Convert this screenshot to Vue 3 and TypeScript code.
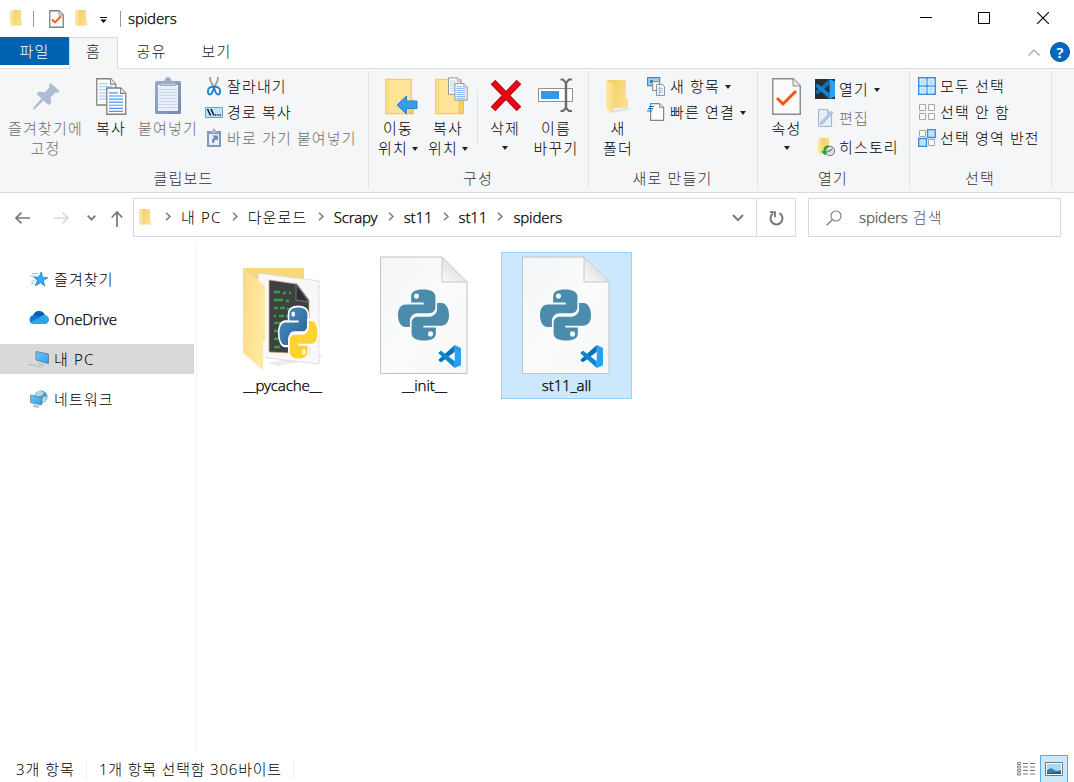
<script setup lang="ts">
interface SideEntry { icon: string; label: string; active?: boolean }
interface FileEntry { name: string; kind: 'folder' | 'python'; selected?: boolean }

const crumbs: string[] = ['내 PC', '다운로드', 'Scrapy', 'st11', 'st11', 'spiders']
const sideEntries: SideEntry[] = [
  { icon: 'star', label: '즐겨찾기' },
  { icon: 'cloud', label: 'OneDrive' },
  { icon: 'pc', label: '내 PC', active: true },
  { icon: 'network', label: '네트워크' },
]
const files: FileEntry[] = [
  { name: '__pycache__', kind: 'folder' },
  { name: '__init__', kind: 'python' },
  { name: 'st11_all', kind: 'python', selected: true },
]
const isLatin = (s: string): boolean => /^[\x20-\x7e]+$/.test(s)
</script>

<template>
  <div class="window">
    <svg class="defs" width="0" height="0">
      <defs>
        <linearGradient id="gFolder" x1="0" y1="0" x2="1" y2="0.4">
          <stop offset="0" stop-color="#f3ca5e" /><stop offset="1" stop-color="#fbdf8c" />
        </linearGradient>
        <linearGradient id="gFlap" x1="0" y1="0" x2="1" y2="0">
          <stop offset="0" stop-color="#ffe9a6" /><stop offset="1" stop-color="#fbd97c" />
        </linearGradient>
        <linearGradient id="gFlapBig" x1="0" y1="0" x2="1" y2="0.3">
          <stop offset="0" stop-color="#fbdc86" /><stop offset="1" stop-color="#ffe9a2" />
        </linearGradient>
        <linearGradient id="gPage" x1="0" y1="0" x2="1" y2="1">
          <stop offset="0" stop-color="#f4f5f6" /><stop offset="0.5" stop-color="#fafbfb" /><stop offset="1" stop-color="#f7f7f8" />
        </linearGradient>
        <linearGradient id="gCurl" x1="0" y1="1" x2="0.7" y2="0.2">
          <stop offset="0" stop-color="#fafafa" /><stop offset="1" stop-color="#dadada" />
        </linearGradient>
        <linearGradient id="gBlue" x1="0" y1="0" x2="1" y2="1">
          <stop offset="0" stop-color="#4a90c8" /><stop offset="1" stop-color="#285f8e" />
        </linearGradient>
        <linearGradient id="gClip" x1="0" y1="0" x2="1" y2="1">
          <stop offset="0" stop-color="#98abc9" /><stop offset="1" stop-color="#7489b0" />
        </linearGradient>
        <linearGradient id="gScreen" x1="0" y1="0" x2="1" y2="1">
          <stop offset="0" stop-color="#6cc9ff" /><stop offset="1" stop-color="#2d9df0" />
        </linearGradient>
      </defs>
      <symbol id="folder" viewBox="0 0 12 17">
        <path d="M1 0h10v10.5l1 .6v4.4H4V2z" fill="url(#gFolder)" />
        <path d="M0 0l4 2.6v9l-.5 5.4L0 14.6z" fill="url(#gFlap)" />
      </symbol>
      <symbol id="pyhalf" viewBox="0 0 24 24" overflow="visible">
        <path fill-rule="evenodd" d="M11.9 0C8 0 6.2 1.2 6.2 3.3v2.8h5.9V7H3.7C1.2 7 0 9 0 12s1.3 5.7 3.5 5.7h2.1v-2.8c0-2.1 1.6-3.7 3.7-3.7h5.5c1.6 0 2.8-1.2 2.8-2.8V3.3C17.6 1.2 15.3 0 11.9 0zM8.7 1.9a1.2 1.2 0 1 1 0 2.4 1.2 1.2 0 0 1 0-2.4z" />
      </symbol>
      <symbol id="vscode" viewBox="0 0 24 24">
        <path d="M17.5 0L1 14.8c-.6.5-.6 1.200 0 1.600l1.400 1.200c.4.4 1 .4 1.500 0L17.500 7z" fill="#0b70b8" />
        <path d="M17.500 24L1 9.200c-.6-.5-.6-1.200 0-1.600l1.400-1.200c.4-.4 1-.4 1.500 0L17.500 17z" fill="#0a86d4" />
        <path d="M17.500 0L24 3v18l-6.500 3z" fill="#28a2ee" />
      </symbol>
      <symbol id="copydocs" viewBox="0 0 31 36">
        <path d="M.75.75h14l5 5v20.500h-19z" fill="#fbfbfb" stroke="#858585" stroke-width="1.300" />
        <path d="M14.500.75v5.200h5" fill="#ececec" stroke="#858585" />
        <path d="M3 5.500h9M3 8.500h13M3 11.500h13M3 14.500h13M3 17.500h13M3 20.500h13" stroke="#9cc3f7" />
        <path d="M10.750 9.750h14l5 5v20.500h-19z" fill="#fdfdfd" stroke="#808080" stroke-width="1.300" />
        <path d="M24.500 9.750v5.200h5" fill="#ececec" stroke="#808080" />
        <path d="M13 14.500h9M13 17.500h14M13 20.500h14M13 23.500h14M13 26.500h14M13 29.500h14M13 32.500h14" stroke="#4c95f5" stroke-width="1.100" />
      </symbol>
      <symbol id="bigfolder" viewBox="0 0 30 37">
        <path d="M.75.75h26.500v21.500h2v14H.75z" fill="#ffe397" stroke="#efcd5f" stroke-width="1.200" />
        <path d="M3.500 1v35" stroke="#f3d477" />
        <path d="M25 36V25q0-2.500 2-2.500t2.200 2.500v11z" fill="#f7d368" stroke="#e5bc48" />
      </symbol>
      <symbol id="checkpage" viewBox="0 0 29 37">
        <path d="M.75.75h20.500l7 7v28.500H.75z" fill="#fbfbfb" stroke="#8b8b8b" stroke-width="1.400" />
        <path d="M21 .75V8h7.200" fill="#e8e8e8" stroke="#8b8b8b" />
        <path d="M5 20l6 6 13-13" fill="none" stroke="#f2580d" stroke-width="3" />
      </symbol>

      <symbol id="star" viewBox="0 0 20 18">
        <path d="M12.300 2l1.200 5.200 5.300.6-4.600 2.800 1.600 5.400-4.300-3.300-5.300 3 2.200-5.300-3.700-3.500 5.200.2z" fill="#35aaf2" stroke="#1a83d0" stroke-width=".8" />
        <path d="M3 3.500h6M1.500 6h5M2.500 11h3.500M2 13.500h3" stroke="#7fc2ef" stroke-width=".9" />
      </symbol>
      <symbol id="cloud" viewBox="0 0 20 18">
        <path d="M4 6C4.500 2.800 7.200 1 10 1c2.700 0 5 1.500 6 4l-7 5z" fill="#0b5cb5" />
        <path d="M4.500 14A4.400 4.400 0 0 1 4.200 5.300c2.200-.4 4 .5 5.600 1.700L14 10l-6 4z" fill="#0f78d4" />
        <path d="M9.500 8.500C11.500 6 13.500 4.700 16 5c2.500.5 4 2.400 4 4.700 0 2.500-1.800 4.300-4.300 4.300H4.500c-1.500 0-2.800-.7-3.700-2z" fill="#28a8ea" />
      </symbol>
      <symbol id="pc" viewBox="0 0 20 18">
        <path d="M7 1.500l12.500 2.500v9.500L7 10z" fill="url(#gScreen)" stroke="#667887" stroke-width=".8" />
        <path d="M11 13l5 1.500-2 1.500-6-1.500z" fill="#b9c2c9" />
        <path d="M0 14.500l4 .5 5 1.500 4 1" stroke="#a6adb2" fill="none" stroke-dasharray="3 1" />
      </symbol>
      <symbol id="network" viewBox="0 0 20 18">
        <circle cx="12" cy="7" r="6.500" fill="#4e9cc4" />
        <path d="M8 2c3-2 6-1 7 1l-3 3-4 1-2-1zM14 7l4-1-1 5-3 2-1-3z" fill="#b0d9e6" />
        <path d="M1.500 5l11 2.500V15l-11-2.500z" fill="url(#gScreen)" stroke="#6c7e8b" stroke-width=".8" />
        <path d="M5 14.500l6 1.500-2 2-5-1z" fill="#b5bfc5" />
      </symbol>
    </svg>

    <header class="titlebar">
      <svg class="tb-folder" width="12" height="17"><use href="#folder" /></svg>
      <i class="tb-sep first" />
      <svg class="tb-check" width="15" height="18" viewBox="0 0 15 18">
        <path d="M.75.750h9.500l4 4v12.500H.75z" fill="#f9f9f9" stroke="#808080" stroke-width="1.300" />
        <path d="M10 .75V5h4.200" fill="#ddd" stroke="#999" />
        <path d="M3 9.500l3 3 6-6.300" fill="none" stroke="#ee6019" stroke-width="1.900" />
      </svg>
      <svg class="tb-folder2" width="12" height="17"><use href="#folder" /></svg>
      <svg class="tb-more" width="7" height="6" viewBox="0 0 7 6"><path d="M0 .5h7" stroke="#111" /><path d="M.3 2.500h6.400L3.500 6z" fill="#111" /></svg>
      <i class="tb-sep" />
      <span class="title latin">spiders</span>
      <div class="winbtns">
        <svg width="12" height="12" viewBox="0 0 12 12"><path d="M0 5.500h12" stroke="#000" /></svg>
        <svg width="12" height="12" viewBox="0 0 12 12"><path d="M.5.5h11v11H.5z" stroke="#000" fill="none" /></svg>
        <svg class="w-close" width="12" height="12" viewBox="0 0 12 12"><path d="M0 0l12 12M12 0L0 12" stroke="#000" stroke-width="1.100" /></svg>
      </div>
    </header>

    <nav class="tabs">
      <span class="tab file">파일</span>
      <span class="tab home">홈</span>
      <span class="tab share">공유</span>
      <span class="tab view">보기</span>
      <svg class="collapse" width="12" height="7" viewBox="0 0 12 7"><path d="M.5 6.500L6 1l5.500 5.500" fill="none" stroke="#a0a0a0" stroke-width="1.200" /></svg>
      <span class="help">?</span>
    </nav>

    <section class="ribbon">
      <div class="group g-clip">
        <div class="tools">
          <div class="big pin dim">
            <svg width="28" height="28" viewBox="0 0 28 28">
              <path d="M17.500 1l9 8-1.500 2-2.500-.5-5 5 .7 5.500-2.700 2.300-5-4.800L1.800 27 0 27.500l.5-2 8-9L3.500 12 6 9.500l6 .7 4.500-5.200L16 3z" fill="#aebdd3" />
            </svg>
            <span>즐겨찾기에<br>고정</span>
          </div>
          <div class="big copy">
            <svg width="31" height="37" viewBox="0 0 31 36" preserveAspectRatio="none"><use href="#copydocs" width="31" height="36" /></svg>
            <span>복사</span>
          </div>
          <div class="big paste dim">
            <svg width="26" height="37" viewBox="0 0 26 37">
              <rect y="4" width="26" height="33" rx="1.500" fill="url(#gClip)" />
              <path d="M3 8h20v26H3z" fill="#eaf0f9" />
              <path d="M4 12.500h18M4 15.500h18M4 18.500h18M4 21.500h18M4 24.500h18M4 27.500h18M4 30.500h18" stroke="#c7d6ea" />
              <path d="M5 9V5.500l4-1.500c.8-.5 1.200-4 4-4s3.200 3.500 4 4l4 1.500V9z" fill="#9badc8" />
              <path d="M6 7.500h14" stroke="#c4d1e2" />
            </svg>
            <span>붙여넣기</span>
          </div>
          <div class="rows">
            <div class="row">
              <svg width="18" height="20" viewBox="0 0 18 20">
                <path d="M5 1c0 3 1.500 7 5 11M13 1c0 3-1.500 7-5 11" stroke="#979ca1" stroke-width="1.700" fill="none" />
                <path d="M8.500 11c-1.500-.7-4.500 0-5.300 2.500s0 5 1.500 5 3.300-3 4.300-7c1 4 2.800 7 4.300 7s2.300-2.500 1.500-5-3.800-3.200-5.300-2.500z" fill="none" stroke="#1c84cf" stroke-width="1.900" />
              </svg>
              <span>잘라내기</span>
            </div>
            <div class="row">
              <svg width="18" height="20" viewBox="0 0 18 20">
                <path d="M.5 5.500h17v10H.5z" fill="#bfe2fb" stroke="#6f9fc8" />
                <path d="M2.500 7l3 6.500M6 7l3 6.500" stroke="#111" stroke-width="1.500" />
                <path d="M10 13h1.300m1 0h1.300m1 0h1.300" stroke="#222" stroke-width="1.500" />
              </svg>
              <span>경로 복사</span>
            </div>
            <div class="row dim">
              <svg width="18" height="20" viewBox="0 0 18 20">
                <path d="M2 3h14v16H2z" fill="#8297bb" />
                <path d="M4 6h10v11H4z" fill="#e8eef7" />
                <path d="M5 5l2-2.500L9 0l2 2.500L13 5z" fill="#a8b8d0" />
                <path d="M7.500 7.500H13V13l-1.700-1.700C9.500 12 9 13.500 9 15.500c-2.500-1-3-4 .3-6z" fill="#7188b3" />
              </svg>
              <span>바로 가기 붙여넣기</span>
            </div>
          </div>
        </div>
        <h6>클립보드</h6>
      </div>

      <div class="group g-org">
        <div class="tools">
          <div class="big b50">
            <svg class="nudge" width="34" height="38" viewBox="0 0 34 38">
              <use href="#bigfolder" x="1" y="1" width="29" height="37" />
              <path d="M13 28L22.500 19v5h10.500v7.500H22.500v5.500z" fill="#3a9be8" stroke="#2384cf" />
            </svg>
            <span>이동<br>위치<i class="caret" /></span>
          </div>
          <div class="big b50">
            <svg class="nudge" width="34" height="38" viewBox="0 0 34 38">
              <use href="#bigfolder" x="1" y="1" width="29" height="37" />
              <use href="#copydocs" x="14" y="-.5" width="20" height="25" />
            </svg>
            <span>복사<br>위치<i class="caret" /></span>
          </div>
          <i class="inner-sep" />
          <div class="big b54">
            <svg class="del" width="32" height="38" viewBox="0 0 32 38">
              <path d="M3 5l26 27M29 5L3 32" stroke="#b3000b" stroke-width="6.400" />
              <path d="M3.500 5.500l25 26M28.500 5.500l-25 26" stroke="#e90614" stroke-width="4.800" />
            </svg>
            <span>삭제<br><i class="caret solo" /></span>
          </div>
          <div class="big b48">
            <svg width="38" height="38" viewBox="0 0 38 38">
              <path d="M1.500 11.500h34v13h-34z" fill="#fff" stroke="#8f8f8f" />
              <path d="M4 14h18v8H4z" fill="#3498ea" />
              <path d="M29 5v27" stroke="#6a6a6a" stroke-width="2.400" />
              <path d="M23.500 2.500h2.500L29 6l3-3.500H35M23.500 34h2.500L29 31l3 3H35" fill="none" stroke="#6a6a6a" stroke-width="2" />
            </svg>
            <span>이름<br>바꾸기</span>
          </div>
        </div>
        <h6>구성</h6>
      </div>

      <div class="group g-new">
        <div class="tools">
          <div class="big newf">
            <svg width="26" height="36" viewBox="0 0 26 36">
              <path d="M7 31l16-2 3 1-17 4z" fill="#e2e2e2" />
              <path d="M1 1h20v17l2 2v9H8z" fill="url(#gFolder)" />
              <path d="M1 1l8 5v21l-2 8-6-6z" fill="url(#gFlap)" />
            </svg>
            <span>새<br>폴더</span>
          </div>
          <div class="rows wide">
            <div class="row">
              <svg width="18" height="20" viewBox="0 0 18 20">
                <path d="M.6 1.600h12v8H.6z" fill="#9fd0f2" stroke="#4b88b4" stroke-width="1.200" />
                <path d="M3 4h3v3H3z" fill="#347fab" />
                <path d="M5.600 5.600h7v9h-7z" fill="#f5f5f5" stroke="#888" />
                <path d="M9.600 8.600h6l2 2v8.800h-8z" fill="#fff" stroke="#888" />
                <path d="M11 12.500h5M11 14.500h5M11 16.500h5" stroke="#a4cbed" /><path d="M12.500 10v9" stroke="#ed9a9a" />
              </svg>
              <span>새 항목<i class="caret" /></span>
            </div>
            <div class="row">
              <svg width="18" height="20" viewBox="0 0 18 20">
                <path d="M3.600 1.600h9l4 4v12.800h-13z" fill="#fdfdfd" stroke="#858585" stroke-width="1.200" />
                <path d="M12.500 1.600v4h4" fill="#ddd" stroke="#999" />
                <path d="M2 4.500h5M1 6.700h5M0 9h5" stroke="#1675c4" stroke-width="1.200" />
              </svg>
              <span>빠른 연결<i class="caret" /></span>
            </div>
          </div>
        </div>
        <h6>새로 만들기</h6>
      </div>

      <div class="group g-open">
        <div class="tools">
          <div class="big prop">
            <svg width="29" height="37"><use href="#checkpage" /></svg>
            <span>속성<br><i class="caret solo" /></span>
          </div>
          <div class="rows r29">
            <div class="row">
              <svg width="20" height="20" viewBox="0 0 20 20">
                <path d="M0 0h20v20H0z" fill="#2a2d31" />
                <svg x="0" y="0" width="20" height="20"><use href="#vscode" /></svg>
              </svg>
              <span>열기<i class="caret" /></span>
            </div>
            <div class="row dim">
              <svg width="20" height="20" viewBox="0 0 20 20">
                <path d="M3.600 1.600h9l4 4v12.800h-13z" fill="#e9eff8" stroke="#9fb0cc" />
                <path d="M12.500 1.600v4h4" fill="#d2dceb" stroke="#9fb0cc" />
                <path d="M18 4.500L8 15.500l-2.500 1 .5-2.700L16.500 3z" fill="#b7cbe6" stroke="#96aed0" stroke-width=".8" />
              </svg>
              <span>편집</span>
            </div>
            <div class="row">
              <svg width="20" height="20" viewBox="0 0 20 20">
                <svg x="3" y="1" width="12" height="17"><use href="#folder" /></svg>
                <circle cx="15" cy="14" r="4.700" fill="#dedede" stroke="#777" />
                <path d="M15 14l2.500-2.500M15 14h-2.500" stroke="#555" />
                <path d="M13.500 8c-3.500.5-5.500 3-5 6.200H6l4 4.300 3-4.300h-2c0-2 1-3.700 3-4.200z" fill="#27a83a" />
              </svg>
              <span>히스토리</span>
            </div>
          </div>
        </div>
        <h6>열기</h6>
      </div>

      <div class="group g-sel">
        <div class="tools">
          <div class="rows">
            <div class="row">
              <svg width="18" height="18" viewBox="0 0 18 18">
                <path d="M.75.75h16.500v16.500H.75zM9 1v16M1 9h16" fill="#bde1fb" stroke="#3390df" stroke-width="1.400" />
                <path d="M2.200 2.200h5.600v5.600H2.200zM10.200 2.200h5.600v5.600h-5.600zM2.200 10.200h5.600v5.600H2.200zM10.200 10.200h5.600v5.600h-5.600z" fill="none" stroke="#e5f4ff" stroke-width=".8" />
              </svg>
              <span>모두 선택</span>
            </div>
            <div class="row">
              <svg width="18" height="18" viewBox="0 0 18 18">
                <path d="M1.500 1.500h6v6h-6zM10.500 1.500h6v6h-6zM1.500 10.500h6v6h-6zM10.500 10.500h6v6h-6z" fill="#fafafa" stroke="#a7a7a7" />
              </svg>
              <span>선택 안 함</span>
            </div>
            <div class="row">
              <svg width="18" height="18" viewBox="0 0 18 18">
                <path d="M1.500 1.500h6v6h-6zM10.500 10.500h6v6h-6z" fill="#fafafa" stroke="#a7a7a7" />
                <path d="M9.500.700h7.800v7.800H9.500zM.7 9.500h7.800v7.800H.7z" fill="#bde1fb" stroke="#3390df" stroke-width="1.300" />
              </svg>
              <span>선택 영역 반전</span>
            </div>
          </div>
        </div>
        <h6>선택</h6>
      </div>
    </section>

    <div class="addressbar">
      <div class="arrows">
        <svg width="15" height="12" viewBox="0 0 15 12"><path d="M15 6H1M6.500 .7L1 6l5.500 5.300" fill="none" stroke="#777" stroke-width="1.700" /></svg>
        <svg width="15" height="12" viewBox="0 0 15 12"><path d="M0 6h14M8.500.7L14 6l-5.500 5.300" fill="none" stroke="#dadada" stroke-width="1.600" /></svg>
        <svg class="a-down" width="9" height="6" viewBox="0 0 9 6"><path d="M.7.7l3.800 4 3.800-4" fill="none" stroke="#777" stroke-width="1.700" /></svg>
        <svg class="a-up" width="12" height="16" viewBox="0 0 12 16"><path d="M6 16V1M.7 6.500L6 1l5.300 5.500" fill="none" stroke="#777" stroke-width="1.700" /></svg>
      </div>
      <div class="path">
        <svg class="p-folder" width="12" height="17"><use href="#folder" /></svg>
        <template v-for="(c, i) in crumbs" :key="i">
          <svg class="chev" width="6" height="9" viewBox="0 0 6 9"><path d="M1 .7l4 3.800-4 3.800" fill="none" stroke="#777" stroke-width="1.500" /></svg>
          <span class="crumb" :class="{ latin: isLatin(c) }">{{ c }}</span>
        </template>
        <svg class="p-drop" width="12" height="8" viewBox="0 0 12 8"><path d="M1 1l5 5.200L11 1" fill="none" stroke="#777" stroke-width="1.900" /></svg>
        <div class="refresh">
          <svg width="16" height="16" viewBox="0 0 16 16"><path d="M11.500 3.200a6 6 0 1 1-6.500.3" fill="none" stroke="#777" stroke-width="2" /><path d="M2 2.200h5v5" fill="none" stroke="#777" stroke-width="1.800" /></svg>
        </div>
      </div>
      <div class="search">
        <svg width="16" height="16" viewBox="0 0 16 16"><circle cx="10" cy="6" r="5" fill="none" stroke="#777" stroke-width="1.100" /><path d="M6.300 9.700L.6 15.300" stroke="#777" stroke-width="1.200" /></svg>
        <span class="query"><span class="latin">spiders</span> 검색</span>
      </div>
    </div>

    <main class="body">
      <aside class="side">
        <div v-for="s in sideEntries" :key="s.label" class="entry" :class="{ active: s.active }">
          <svg width="20" height="18"><use :href="'#' + s.icon" /></svg>
          <span :class="{ latin: isLatin(s.label) }">{{ s.label }}</span>
        </div>
      </aside>
      <div class="files">
        <div v-for="f in files" :key="f.name" class="fileitem" :class="{ selected: f.selected }">
          <svg v-if="f.kind === 'folder'" class="pic" width="92" height="118" viewBox="0 0 92 118">
            <path d="M32 107l48-10 8 4-46 9z" fill="#ececec" />
            <path d="M7 12h61v88H20z" fill="#f8d77d" />
            <path d="M22 17l61 8v83l-61-7z" fill="#f8f8fa" stroke="#cfcfcf" stroke-width=".8" stroke-dasharray="4 1" />
            <path d="M33 24l28 4 12 16v54l-40-2z" fill="#3f4042" stroke="#c7ad80" stroke-width=".8" />
            <path d="M60 28v16l13 2z" fill="#2f3031" stroke="#777" />
            <path d="M38 36h6m3 1h3m3 0h2M38 44h9m3 1h3M38 52h4m2 0h5m2 1h3M38 60h2m3 0h5m2 0h5M38 67h7m3 0h5M38 75h5m2 0h5M38 83h6M38 91h6" stroke="#33a238" stroke-width="2.600" />
            <svg x="43.500" y="51.500" width="38" height="51" viewBox="0 0 24 24" preserveAspectRatio="none" overflow="visible" stroke="#fff" stroke-width="2" paint-order="stroke">
              <use href="#pyhalf" width="24" height="24" fill="url(#gBlue)" />
              <use href="#pyhalf" width="24" height="24" fill="#fdd331" transform="rotate(180 12 12)" />
            </svg>
            <path d="M7 12l22 18v54l-2 3v27L7 97z" fill="url(#gFlapBig)" />
          </svg>
          <svg v-else class="pic" width="90" height="118" viewBox="0 0 90 118">
            <path d="M1.500 1h61.500l25 25v91.500H1.500z" fill="url(#gPage)" stroke="#c2c2c2" />
            <path d="M63 1v25h25z" fill="url(#gCurl)" stroke="#c8c8c8" />
            <svg x="19" y="33" width="51" height="52" viewBox="0 0 24 24" fill="#4b8bab">
              <use href="#pyhalf" width="24" height="24" />
              <use href="#pyhalf" width="24" height="24" transform="rotate(180 12 12)" />
            </svg>
            <svg x="58.500" y="89" width="24" height="23"><use href="#vscode" /></svg>
          </svg>
          <span class="latin">{{ f.name }}</span>
        </div>
      </div>
    </main>

    <footer class="status">
      <span class="count">3개 항목</span>
      <span class="chosen">1개 항목 선택함 306바이트</span>
      <svg class="v-detail" width="19" height="14" viewBox="0 0 19 14">
        <path d="M.5.500h3v2h-3zM.5 4h3v2h-3zM.5 7.500h3v2h-3zM.5 11h3v2h-3z" fill="none" stroke="#888" />
        <path d="M6 1.500h5M13 1.500h5M6 5h5M13 5h5M6 8.500h5M13 8.500h5M6 12h5M13 12h5" stroke="#777" />
      </svg>
      <div class="v-thumb">
        <svg width="18" height="14" viewBox="0 0 18 14">
          <path d="M.5.500h17v13H.5z" fill="#fff" stroke="#777" />
          <path d="M2 2h14v10H2z" fill="#a9d6f5" /><path d="M2 8l4-2 5 3 5-1v4H2z" fill="#3a7eae" /><path d="M2 11l14-1v2H2z" fill="#265d7e" />
        </svg>
      </div>
    </footer>
  </div>
</template>

<style>
body { background: #fff; }
</style>

<style scoped>
* { box-sizing: border-box; }
.window {
  width: 1074px; height: 782px; overflow: hidden; display: flex; flex-direction: column;
  font-family: "Noto Sans", "Noto Sans CJK KR", sans-serif; font-size: 15px; font-weight: 300;
  letter-spacing: 1.15px; line-height: 20px; color: #000; background: #fff; white-space: nowrap;
}
.defs { position: absolute; }
svg { display: block; flex: none; }
.latin { font-size: 15px; letter-spacing: -0.15px; -webkit-text-stroke: 0.25px currentColor; }

.titlebar { height: 37px; display: flex; align-items: center; flex: none; }
.tb-folder { margin-left: 10px; }
.tb-sep { width: 1px; height: 16px; background: #999; }
.tb-sep.first { margin-left: 11px; }
.tb-check { margin-left: 15px; }
.tb-folder2 { margin-left: 11px; }
.tb-more { margin: 2px 13px 0 13px; }
.title { margin: 0 0 2px 7px; }
.winbtns { margin: 0 25px 1px auto; display: flex; gap: 46px; }
.w-close { margin-left: 1px; }

.tabs { height: 32px; display: flex; flex: none; border-bottom: 1px solid #dadbdc; line-height: 28px; }
.tab { text-align: center; height: 28px; color: #222; }
.tab.file { width: 69px; background: #0063b1; color: #fff; }
.home { width: 49px; height: 32px; border: 1px solid #dadbdc; border-bottom: 0; background: #f5f6f7; line-height: 27px; }
.share { width: 67px; }
.view { width: 63px; }
.collapse { margin-left: auto; margin-top: 12px; }
.help {
  width: 20px; height: 20px; margin: 5px 4px 0 10px; border-radius: 50%; background: #0568c0; border: 1px solid #07539a;
  color: #fff; font-size: 15px; font-weight: 600; line-height: 18px; text-align: center; letter-spacing: 0;
}

.ribbon { height: 124px; flex: none; display: flex; background: #f5f6f7; border-bottom: 1px solid #dadbdc; padding-top: 2px; }
.group { height: 118px; border-right: 1px solid #e2e3e4; display: flex; flex-direction: column; justify-content: space-between; }
.g-clip { width: 369px; }
.g-org { width: 220px; }
.g-new { width: 169px; }
.g-open { width: 152px; }
.g-sel { width: 142px; }
h6 { margin: 0; padding-right: 1px; font: inherit; text-align: center; color: #333; height: 21px; line-height: 20px; }
.tools { display: flex; height: 92px; }
.big { display: flex; flex-direction: column; align-items: center; text-align: center; }
.big > span { margin-top: auto; height: 45px; }
.big > svg { margin-top: 7px; }
.dim { color: #6c6c6c; }
.pin { width: 91px; }
.pin > svg { margin-top: 11px; margin-left: 3px; }
.copy { width: 40px; }
.paste { width: 74px; }
.paste > svg { margin-top: 6px; }
.rows { padding-top: 2px; }
.row { height: 26px; display: flex; align-items: center; }
.row > svg { margin-right: 4px; }
.rows.wide .row > svg { margin-right: 5px; }
.caret { display: inline-block; border: 3.500px solid transparent; border-top: 4px solid #222; border-bottom: 0; margin: 0 0 3px 5px; vertical-align: 0; }
.b50 .caret { margin-left: 4px; }
.caret.solo { margin: 0 0 4px 0; }
.g-org .tools { padding-left: 4px; }
.b50 { width: 50px; }
.big > .nudge { margin-top: 6px; margin-left: 5px; }
.inner-sep { width: 1px; height: 55px; background: #e2e3e4; margin: 19px 0 0 4px; }
.b54 { width: 54px; }
.big > .del { margin-left: 2px; margin-top: 6px; }
.b48 { width: 48px; }
.b48 > svg { margin-top: 6px; }
.newf { width: 58px; }
.newf > svg { margin-top: 8px; }
.prop { width: 57px; }
.r29 { padding-top: 3px; }
.r29 .row { height: 29px; }
.g-sel .rows { padding-left: 8px; }

.addressbar { height: 50px; flex: none; display: flex; padding-top: 5px; }
.arrows { width: 133px; height: 39px; display: flex; align-items: center; padding-left: 15px; gap: 24px; }
.a-down { margin-left: -6px; }
.a-up { margin: 2px 0 0 -9px; }
.path { width: 663px; height: 39px; border: 1px solid #d9d9d9; display: flex; align-items: center; padding-left: 5px; }
.p-folder { margin-bottom: 1px; }
.chev { margin: 0 10px 2px 14px; }
.crumb { margin-bottom: 2px; }
.crumb + .chev { margin: 0 10px 2px 10.200px; }
.p-drop { margin-left: auto; }
.refresh { width: 39px; height: 37px; margin-left: 12px; border-left: 1px solid #d9d9d9; display: flex; align-items: center; justify-content: center; }
.search { width: 253px; height: 39px; margin-left: 12px; border: 1px solid #d9d9d9; display: flex; align-items: center; padding-left: 17px; gap: 17px; color: #555; }
.query { margin-bottom: 2px; }

.body { flex: 1; display: flex; }
.side { width: 197px; border-right: 1px solid #f4f4f4; padding-top: 21px; display: flex; flex-direction: column; gap: 10px; }
.entry { width: 194px; height: 30px; padding-left: 29px; display: flex; align-items: center; gap: 5px; }
.entry.active { background: #d9d9d9; }
.files { display: flex; gap: 11px; padding: 9px 0 0 20px; align-items: flex-start; }
.fileitem { width: 131px; height: 147px; border: 1px solid transparent; display: flex; flex-direction: column; align-items: center; padding-top: 3px; }
.pic { margin-right: 2px; }
.fileitem > span { margin-top: 1px; }
.fileitem.selected { background: #cce8ff; border-color: #99d1ff; }

.status { height: 27px; flex: none; display: flex; align-items: center; }
.count { margin-left: 16px; width: 71px; border-right: 1px solid #eee; letter-spacing: 1px; }
.chosen { padding-left: 12px; width: 207px; border-right: 1px solid #eee; letter-spacing: .8px; }
.v-detail { margin-left: auto; }
.v-thumb { width: 28px; height: 28px; margin: 0 6px 0 4px; background: #cce8f9; border: 1px solid #4db0e6; display: flex; align-items: center; justify-content: center; }
</style>
